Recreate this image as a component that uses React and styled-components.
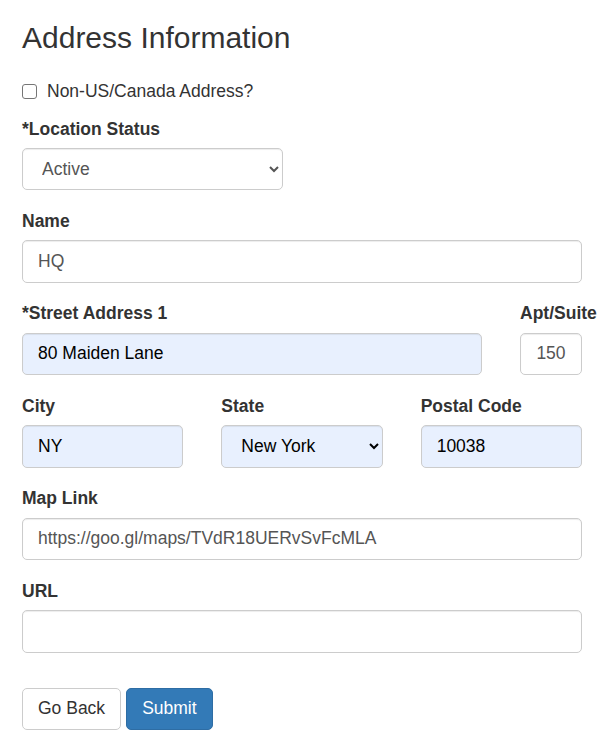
import * as React from 'react'
import styled, { createGlobalStyle } from 'styled-components'

const GlobalStyle = createGlobalStyle`
  * { box-sizing: border-box; }
  body {
    margin: 0;
    background: #fff;
    color: #333;
    font-family: "Liberation Sans", Arial, sans-serif;
    font-size: 17.5px;
    line-height: 1.42857;
  }
`

const Page = styled.div`
  width: 560px;
  margin-left: 22px;
  padding-top: 21px;
`

const Title = styled.h3`
  margin: 0 0 12.5px;
  font-size: 30px;
  font-weight: 500;
  line-height: 1.1;
  color: #333;
`

const CheckRow = styled.label`
  display: flex;
  align-items: center;
  gap: 10px;
  margin: 25px 0 12.5px;
  height: 25px;
  cursor: pointer;
`

const Check = styled.input`
  appearance: none;
  width: 15px;
  height: 15px;
  margin: 0;
  border: 1px solid #767676;
  border-radius: 3px;
  background: #fff;
`

const Group = styled.div`
  margin-bottom: 18.75px;
`

const Label = styled.label`
  display: block;
  margin-bottom: 6.25px;
  font-weight: 700;
  white-space: nowrap;
`

const Input = styled.input`
  display: block;
  width: 100%;
  height: 42.5px;
  padding: 7.5px ${p => (p.$center ? '4px' : '15px')};
  font: inherit;
  color: ${p => (p.$filled ? '#000' : '#555')};
  background: ${p => (p.$filled ? '#e8f0fe' : '#fff')};
  border: 1px solid #ccc;
  border-radius: 5px;
  box-shadow: inset 0 1px 1px rgba(0, 0, 0, 0.075);
  text-align: ${p => (p.$center ? 'center' : 'left')};
  outline: none;
`

const Select = styled.select`
  display: block;
  width: ${p => p.$width || '100%'};
  height: 42.5px;
  padding: 7.5px 8px 7.5px 15px;
  font: inherit;
  color: ${p => (p.$filled ? '#000' : '#555')};
  background: ${p => (p.$filled ? '#e8f0fe' : '#fff')};
  border: 1px solid #ccc;
  border-radius: 5px;
  box-shadow: inset 0 1px 1px rgba(0, 0, 0, 0.075);
  outline: none;
`

const Row = styled.div`
  display: grid;
  grid-template-columns: ${p => p.$cols};
  column-gap: 38px;
`

const Actions = styled.div`
  display: flex;
  gap: 5px;
  margin-top: 35px;
`

const Button = styled.button`
  height: 42.5px;
  padding: 7.5px 15px;
  font: inherit;
  border-radius: 5px;
  border: 1px solid ${p => (p.$primary ? '#2e6da4' : '#ccc')};
  background: ${p => (p.$primary ? '#337ab7' : '#fff')};
  color: ${p => (p.$primary ? '#fff' : '#333')};
  cursor: pointer;
`

export default function App() {
  return (
    <>
      <GlobalStyle />
      <Page>
        <Title>Address Information</Title>
        <CheckRow>
          <Check type="checkbox" />
          Non-US/Canada Address?
        </CheckRow>

        <Group>
          <Label>*Location Status</Label>
          <Select $width="261px" defaultValue="Active">
            <option>Active</option>
            <option>Inactive</option>
          </Select>
        </Group>

        <Group>
          <Label>Name</Label>
          <Input defaultValue="HQ" />
        </Group>

        <Row $cols="1fr 62px">
          <Group>
            <Label>*Street Address 1</Label>
            <Input $filled defaultValue="80 Maiden Lane" />
          </Group>
          <Group>
            <Label>Apt/Suite</Label>
            <Input $center defaultValue="150" />
          </Group>
        </Row>

        <Row $cols="1fr 1fr 1fr">
          <Group>
            <Label>City</Label>
            <Input $filled defaultValue="NY" />
          </Group>
          <Group>
            <Label>State</Label>
            <Select $filled defaultValue="New York">
              <option>New York</option>
              <option>New Jersey</option>
            </Select>
          </Group>
          <Group>
            <Label>Postal Code</Label>
            <Input $filled defaultValue="10038" />
          </Group>
        </Row>

        <Group>
          <Label>Map Link</Label>
          <Input defaultValue="https://goo.gl/maps/TVdR18UERvSvFcMLA" />
        </Group>

        <Group>
          <Label>URL</Label>
          <Input />
        </Group>

        <Actions>
          <Button type="button">Go Back</Button>
          <Button type="button" $primary>Submit</Button>
        </Actions>
      </Page>
    </>
  )
}
